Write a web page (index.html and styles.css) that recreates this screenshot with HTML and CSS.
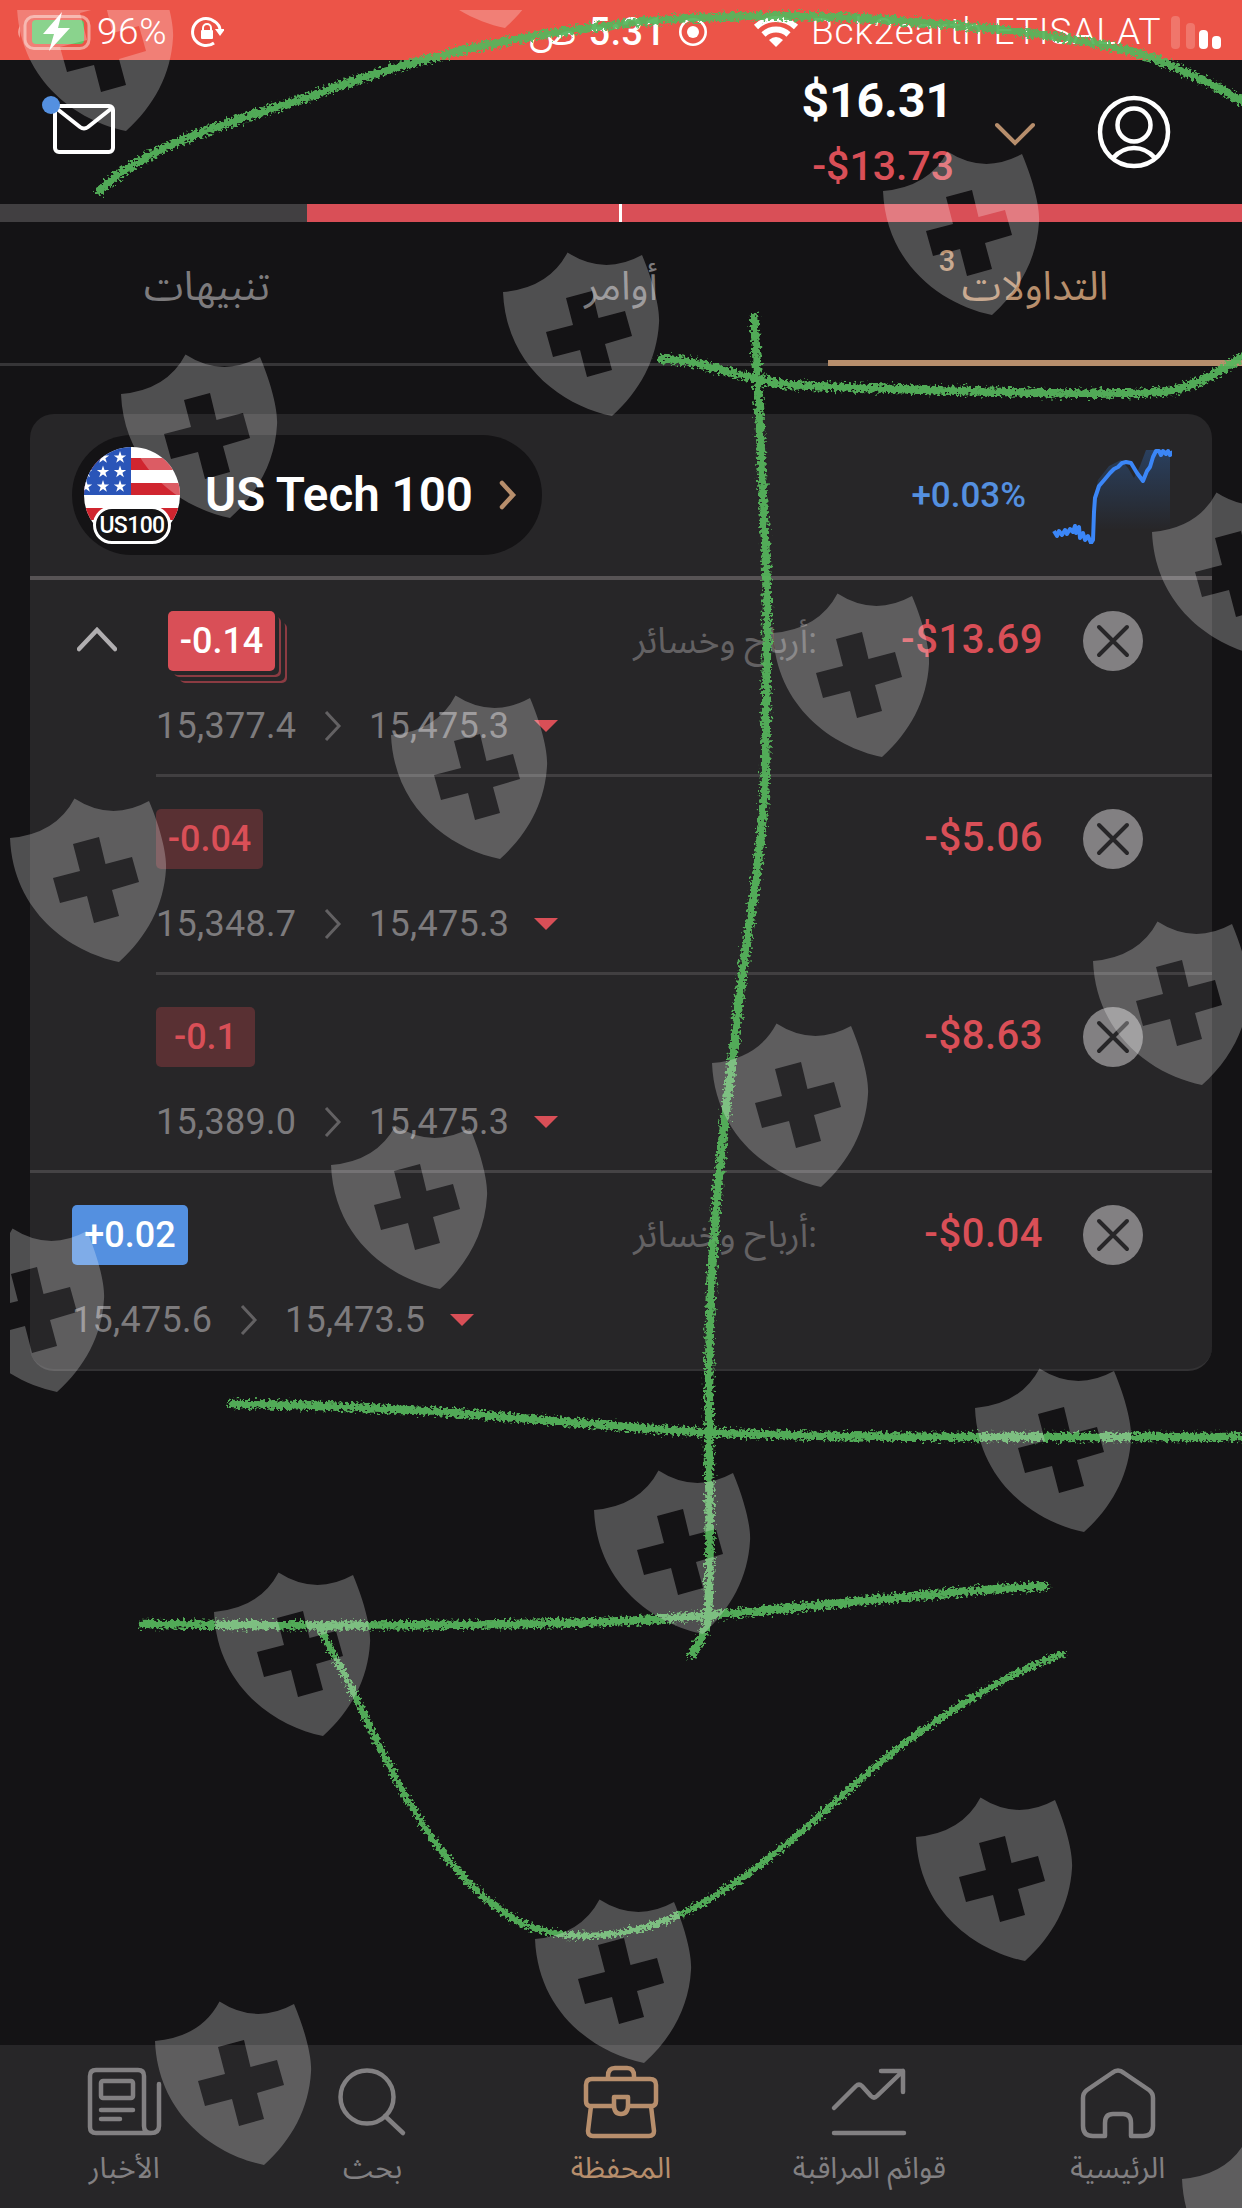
FILE: index.html
```html
<!DOCTYPE html>
<html lang="ar">
<head>
    <meta charset="UTF-8">
    <title>المحفظة</title>
    <link rel="stylesheet" href="styles.css">
</head>
<body>
    <div class="phone">
        <div class="status">
            <div class="battery">
                <svg width="76" height="40" viewBox="0 0 76 40">
                    <path d="M4 14Q0 20 4 26z" fill="#f59a90"/>
                    <rect x="9" y="4.500" width="64" height="32" rx="9" fill="none" stroke="#f4a198" stroke-width="3"/>
                    <rect x="16" y="8" width="52" height="24" rx="4" fill="#62c466"/>
                    <path d="M46 0L27 22h11l-5 17 21-23H42z" fill="#fff"/>
                </svg>
                <span class="percent">96%</span>
            </div>
            <svg class="lock" width="34" height="34" viewBox="0 0 34 34">
                <path d="M25 7A13.500 13.500 0 1 0 24 28M24 6q6 4 6 9" fill="none" stroke="#fff" stroke-width="3"/>
                <path d="M25 14h10l-5 7z" fill="#fff"/>
                <rect x="11" y="15" width="12" height="9" rx="1" fill="#fff"/>
                <path d="M13 16v-3a4 4 0 0 1 8 0v3" fill="none" stroke="#fff" stroke-width="2"/>
            </svg>
            <div class="clock"><span>ص</span><b>5:31</b></div>
            <svg class="record" width="30" height="30" viewBox="0 0 30 30">
                <circle cx="15" cy="15" r="12.700" fill="none" stroke="#fff" stroke-width="2.600"/>
                <circle cx="15" cy="15" r="6" fill="#fff"/>
            </svg>
            <svg class="wifi" width="46" height="32" viewBox="0 0 46 32">
                <path d="M3 11a29 29 0 0 1 40 0M10.500 18.500a18 18 0 0 1 25 0" fill="none" stroke="#fff" stroke-width="6"/>
                <path d="M23 31l-7-7q7-6 14 0z" fill="#fff"/>
            </svg>
            <span class="carrier">Bck2earth ETISALAT</span>
            <div class="signal"><i class="off s4"></i><i class="off s3"></i><i class="s2"></i><i class="s1"></i></div>
        </div>

        <div class="header">
            <div class="mail">
                <svg width="62" height="50" viewBox="0 0 62 50">
                    <rect x="2" y="2" width="58" height="46" rx="4" fill="none" stroke="#fff" stroke-width="4"/>
                    <path d="M3 4l24 19q4 3 8 0L59 4" fill="none" stroke="#fff" stroke-width="4"/>
                </svg>
                <span class="dot"></span>
            </div>
            <div class="balance">
                <div class="total">$16.31</div>
                <div class="diff">-$13.73</div>
            </div>
            <svg class="down" width="40" height="24" viewBox="0 0 40 24">
                <path d="M2 3l18 18L38 3" fill="none" stroke="#b78e6c" stroke-width="4" stroke-linecap="round"/>
            </svg>
            <svg class="user" width="74" height="74" viewBox="0 0 74 74" fill="none" stroke="#fff" stroke-width="4.500">
                <circle cx="37" cy="37" r="34"/>
                <circle cx="37" cy="30" r="16.500"/>
                <path d="M16 63q9-10 21-10t21 10"/>
            </svg>
        </div>

        <div class="margin-bar"><div class="used"><i></i></div></div>

        <div class="tabs">
            <div class="tab">تنبيهات</div>
            <div class="tab">أوامر</div>
            <div class="tab active"><span class="tab-name">التداولات<sup>3</sup></span></div>
        </div>

        <div class="card">
            <div class="card-head">
                <div class="pill">
                    <div class="flag">
                        <svg width="98" height="98" viewBox="0 0 98 98">
                            <clipPath id="round"><circle cx="49" cy="49" r="48"/></clipPath>
                            <g clip-path="url(#round)">
                                <rect width="98" height="98" fill="#fff"/>
                                <path d="M0 12h98v12H0zM0 37h98v12H0zM0 62h98v12H0zM0 86h98v12H0z" fill="#d0252f"/>
                                <rect width="48" height="49" fill="#2a55b8"/>
                                <g fill="#fff">
                                    <path id="star" d="M37 5l1.500 4.500h4.700l-3.800 2.800 1.500 4.500-3.900-2.800-3.800 2.800 1.400-4.500-3.800-2.800h4.700z"/>
                                    <use href="#star" x="-17"/>
                                    <use href="#star" y="14.500"/><use href="#star" x="-17" y="14.500"/><use href="#star" x="-34" y="14.500"/>
                                    <use href="#star" y="29"/><use href="#star" x="-17" y="29"/><use href="#star" x="-34" y="29"/>
                                </g>
                            </g>
                        </svg>
                        <span class="symbol">US100</span>
                    </div>
                    <span class="name">US Tech 100</span>
                    <svg width="20" height="30" viewBox="0 0 20 30"><path d="M4 3l11 12L4 27" fill="none" stroke="#b78e6c" stroke-width="4.500" stroke-linecap="round"/></svg>
                </div>
                <span class="change">+0.03%</span>
                <svg class="chart" width="120" height="98" viewBox="0 0 120 98">
                    <linearGradient id="fade" x1="0" y1="0" x2="0" y2="1">
                        <stop offset="0" stop-color="#2f6fc4" stop-opacity=".35"/>
                        <stop offset="1" stop-color="#2f6fc4" stop-opacity="0"/>
                    </linearGradient>
                    <path d="M40 84L42 52 46 34 57 20 69 14 76 22 82 32 88 20 94 4H118V84z" fill="url(#fade)"/>
                    <path d="M2 85l3 5 2-5 3 4 3-5 2 4 3-5 3 3 2-6 1 7 3-6 1 11 3-5 2 7 3-4 3 7 2-3 1-28 1-14 4-12 6-7 5-6 4-4 4-2 4-4 4-1 5 1 6 10 6 8 4-10 3-4 3-10 3-6 3 0 2 4 2-4 3 3 2-3 2 4 3-3 2 4" fill="none" stroke="#3b86f7" stroke-width="4" stroke-linejoin="round"/>
                </svg>
            </div>

            <div class="row group">
                <div class="toggle">
                    <svg width="40" height="26" viewBox="0 0 40 26"><path d="M2 23L20 4l18 19" fill="none" stroke="#b0aeb0" stroke-width="4.500" stroke-linecap="round"/></svg>
                </div>
                <div class="trade">
                    <div class="line">
                        <span class="amount sell stack">-0.14</span>
                        <span class="label">أرباح وخسائر:</span>
                        <span class="profit">-$13.69</span>
                        <svg class="close" width="60" height="60" viewBox="0 0 60 60"><use href="#close"/></svg>
                    </div>
                    <div class="prices"><span>15,377.4</span><svg class="next" width="18" height="32" viewBox="0 0 18 32"><use href="#next"/></svg><span>15,475.3</span><i class="fall"></i></div>
                </div>
            </div>
            <div class="row sub">
                <div class="trade">
                    <div class="line">
                        <span class="amount sell-dim">-0.04</span>
                        <span class="profit">-$5.06</span>
                        <svg class="close" width="60" height="60" viewBox="0 0 60 60"><use href="#close"/></svg>
                    </div>
                    <div class="prices"><span>15,348.7</span><svg class="next" width="18" height="32" viewBox="0 0 18 32"><use href="#next"/></svg><span>15,475.3</span><i class="fall"></i></div>
                </div>
            </div>
            <div class="row sub">
                <div class="trade">
                    <div class="line">
                        <span class="amount sell-dim short">-0.1</span>
                        <span class="profit">-$8.63</span>
                        <svg class="close" width="60" height="60" viewBox="0 0 60 60"><use href="#close"/></svg>
                    </div>
                    <div class="prices"><span>15,389.0</span><svg class="next" width="18" height="32" viewBox="0 0 18 32"><use href="#next"/></svg><span>15,475.3</span><i class="fall"></i></div>
                </div>
            </div>
            <div class="row single">
                <div class="trade">
                    <div class="line">
                        <span class="amount buy">+0.02</span>
                        <span class="label">أرباح وخسائر:</span>
                        <span class="profit">-$0.04</span>
                        <svg class="close" width="60" height="60" viewBox="0 0 60 60"><use href="#close"/></svg>
                    </div>
                    <div class="prices"><span>15,475.6</span><svg class="next" width="18" height="32" viewBox="0 0 18 32"><use href="#next"/></svg><span>15,473.5</span><i class="fall"></i></div>
                </div>
            </div>
        </div>

        <div class="nav">
            <div class="item">
                <svg width="76" height="72" viewBox="0 0 76 72" fill="none" stroke="#828082" stroke-width="4.500" stroke-linecap="round" stroke-linejoin="round">
                    <path d="M66 66H10q-6 0-6-6V9q0-6 6-6h42q6 0 6 6v50q0 7 7 7 8 0 8-7V17"/>
                    <rect x="15" y="14" width="32" height="17" rx="2"/>
                    <path d="M15 43h32M15 52h19"/>
                </svg>
                <span>الأخبار</span>
            </div>
            <div class="item">
                <svg width="76" height="72" viewBox="0 0 76 72" fill="none" stroke="#828082" stroke-width="4.500" stroke-linecap="round">
                    <circle cx="32" cy="30" r="26.500"/>
                    <path d="M50 49l18 17"/>
                </svg>
                <span>بحث</span>
            </div>
            <div class="item active">
                <svg width="76" height="72" viewBox="0 0 76 72" fill="none" stroke="#b78e6c" stroke-width="4.500" stroke-linejoin="round">
                    <path d="M25 12V9q0-8 7-8h12q7 0 7 8v3"/>
                    <path d="M31 39H7q-4 0-4-5V18q0-6 6-6h58q6 0 6 6v16q0 5-4 5H45"/>
                    <path d="M8 39L5 64q0 5 5 5h56q5 0 5-5l-3-25"/>
                    <path d="M31 30h14v8q0 9-7 9t-7-9z"/>
                </svg>
                <span>المحفظة</span>
            </div>
            <div class="item">
                <svg width="76" height="72" viewBox="0 0 76 72" fill="none" stroke="#828082" stroke-width="4.500" stroke-linecap="round" stroke-linejoin="round">
                    <path d="M3 41l22-22q3-3 6 0l9 10q3 3 6 0L72 4M50 4h22v21M3 66h70"/>
                </svg>
                <span>قوائم المراقبة</span>
            </div>
            <div class="item">
                <svg width="76" height="72" viewBox="0 0 76 72" fill="none" stroke="#828082" stroke-width="4.500" stroke-linejoin="round">
                    <path d="M25 69H13Q3 69 3 59V31q0-5 4-8L32 6q6-5 12 0l25 17q4 3 4 8v28q0 10-10 10H51V56q0-9-8-9H33q-8 0-8 9z"/>
                </svg>
                <span>الرئيسية</span>
            </div>
        </div>

        <!-- pen marks and shields drawn over the whole screen -->
        <svg class="overlay" width="1242" height="2208" viewBox="0 0 1242 2208">
            <defs>
                <g id="close">
                    <circle cx="30" cy="30" r="30" fill="#828082"/>
                    <path d="M16 16l28 28M44 16L16 44" stroke="#272628" stroke-width="4" stroke-linecap="round"/>
                </g>
                <path id="next" d="M2 2l13 14L2 30" fill="none" stroke="#636163" stroke-width="3"/>
                <path id="shield" fill-rule="evenodd" d="M0 41Q46 37 64.500 1.500 101 25 139 4C152 35 157 60 156 72 154 108 137 140 109 165 60 155 3 115 0 41zM63 47L70 74 43 81 50 106 77 99 84 126 109 119 102 93 129 85 122 60 95.500 67 89 40z"/>
                <filter id="chalk" x="-20" y="-20" width="1290" height="2260" filterUnits="userSpaceOnUse">
                    <feTurbulence type="fractalNoise" baseFrequency=".35" numOctaves="2" seed="4"/>
                    <feDisplacementMap in="SourceGraphic" scale="11" xChannelSelector="R" yChannelSelector="G"/>
                </filter>
                <clipPath id="area"><rect x="10" y="10" width="1232" height="2198"/></clipPath>
            </defs>
            <g class="pen" filter="url(#chalk)">
                <path d="M99 191C154 139 240 121 317 94C420 55 520 35 621 24C700 14 820 14 898 21C1010 28 1110 43 1150 57C1190 73 1215 85 1250 106"/>
                <path d="M661 359C700 359 740 379 791 385C850 388 960 391 1037 393Q1120 395 1171 391Q1210 381 1250 351"/>
                <path d="M754 317C758 370 761 460 765 540S766 690 765 777C761 870 744 950 738 1010S717 1160 712 1270C708 1350 709 1400 709 1460C710 1520 710 1570 708 1619Q702 1640 692 1654"/>
                <path d="M232 1404C380 1405 520 1418 640 1428S900 1437 1250 1437"/>
                <path d="M142 1624C300 1626 450 1627 600 1622C760 1616 900 1593 1045 1586"/>
                <path class="thin" d="M317 1625C342 1664 372 1735 401 1788S470 1895 521 1923C580 1948 650 1936 718 1894S850 1785 901 1746Q990 1680 1062 1654"/>
            </g>
            <g fill="#fff" fill-opacity=".255" clip-path="url(#area)">
                <use href="#shield" x="17" y="-34"/><use href="#shield" x="396" y="-137"/>
                <use href="#shield" x="883" y="150"/><use href="#shield" x="503" y="251"/><use href="#shield" x="121" y="353"/>
                <use href="#shield" x="1152" y="491"/><use href="#shield" x="773" y="592"/><use href="#shield" x="391" y="694"/><use href="#shield" x="10" y="797"/>
                <use href="#shield" x="1093" y="920"/><use href="#shield" x="712" y="1022"/><use href="#shield" x="331" y="1124"/><use href="#shield" x="-52" y="1227"/>
                <use href="#shield" x="975" y="1367"/><use href="#shield" x="594" y="1469"/><use href="#shield" x="214" y="1571"/>
                <use href="#shield" x="916" y="1796"/><use href="#shield" x="535" y="1898"/><use href="#shield" x="155" y="2000"/>
                <use href="#shield" x="1182" y="2138"/>
            </g>
        </svg>
    </div>
</body>
</html>
```

FILE: styles.css
```css
* {
    box-sizing: border-box;
}
body {
    margin: 0;
    background: #141315;
    font-family: Roboto, "Noto Sans Arabic", "DejaVu Sans", sans-serif;
    color: #fff;
}
svg {
    display: block;
    flex-shrink: 0;
}
.phone {
    position: relative;
    width: 1242px;
    height: 2208px;
    overflow: hidden;
    display: flex;
    flex-direction: column;
}
.status {
    height: 60px;
    background: #ec5448;
    display: flex;
    align-items: center;
    padding: 4px 18px 0 16px;
    font-size: 36px;
    line-height: 40px;
    white-space: nowrap;
}
.battery {
    display: flex;
    align-items: center;
    width: 174px;
    gap: 5px;
}
.percent {
    font-size: 37px;
    letter-spacing: .6px;
}
.percent, .carrier {
    font-weight: 300;
}
.clock {
    display: flex;
    gap: 12px;
    width: 130px;
    margin-left: 312px;
    justify-content: flex-end;
}
.clock b {
    font-weight: 500;
    font-size: 38px;
    letter-spacing: .7px;
}
.record {
    margin-left: 12px;
}
.wifi {
    margin-left: 45px;
}
.carrier {
    margin-left: 12px;
    width: 348px;
    font-size: 37px;
    letter-spacing: .85px;
}
.signal {
    display: flex;
    align-items: flex-end;
    gap: 4px;
    height: 33px;
    margin-left: 12px;
}
.signal i {
    width: 9px;
    border-radius: 4px;
    background: #fff;
}
.signal .off {
    background: #f0766b;
}
.signal .s4 { height: 33px; margin-right: 2px; }
.signal .s3 { height: 26px; }
.signal .s2 { height: 19px; }
.signal .s1 { height: 13px; }

.header {
    height: 144px;
    display: flex;
    align-items: flex-start;
    padding: 0 71px 0 53px;
}
.mail {
    position: relative;
    margin-top: 44px;
}
.dot {
    position: absolute;
    left: -11px;
    top: -8px;
    width: 18px;
    height: 18px;
    border-radius: 50%;
    background: #5490e0;
}
.balance {
    margin-left: auto;
    text-align: right;
}
.total {
    margin-top: 13px;
    margin-right: -5px;
    font-size: 48px;
    line-height: 56px;
    font-weight: 700;
}
.diff {
    margin-top: 13px;
    margin-right: -6px;
    font-size: 41px;
    line-height: 48px;
    font-weight: 500;
    color: #d94f57;
}
.down {
    margin: 62px 0 0 47px;
}
.user {
    margin: 35px 0 0 62px;
}
.margin-bar {
    height: 18px;
    background: #413f41;
}
.used {
    height: 18px;
    margin-left: 307px;
    background: #d94f57;
}
.used i {
    display: block;
    width: 3px;
    height: 18px;
    margin-left: 312px;
    background: #fff;
}

.tabs {
    display: grid;
    grid-template-columns: 1fr 1fr 1fr;
    height: 144px;
}
.tab {
    display: flex;
    justify-content: center;
    padding-top: 37px;
    font-size: 40px;
    line-height: 56px;
    color: #7d7b7d;
    border-bottom: 3px solid #363537;
}
.tab.active {
    color: #b78e6c;
    border-bottom: 6px solid #b78e6c;
}
.tab-name {
    position: relative;
}
.tab-name sup {
    position: absolute;
    left: -23px;
    top: -15px;
    font-size: 29px;
    line-height: 34px;
    font-weight: 500;
}

.card {
    margin: 48px 30px 0;
    height: 957px;
    border-radius: 24px;
    background: #272628;
    border-bottom: 2px solid #333234;
}
.card-head {
    height: 166px;
    display: flex;
    align-items: center;
    padding: 0 40px 0 42px;
    border-bottom: 4px solid #575355;
}
.pill {
    width: 470px;
    height: 120px;
    border-radius: 60px;
    background: #141315;
    display: flex;
    align-items: center;
    padding-left: 11px;
}
.flag {
    position: relative;
    width: 98px;
    height: 98px;
}
.symbol {
    position: absolute;
    left: 10px;
    top: 60px;
    width: 78px;
    height: 38px;
    border: 3px solid #fff;
    border-radius: 19px;
    background: #141315;
    font-size: 23px;
    line-height: 34px;
    font-weight: 500;
    text-align: center;
    letter-spacing: -.6px;
}
.name {
    width: 293px;
    margin-left: 24px;
    font-size: 47.500px;
    font-weight: 600;
    line-height: 60px;
    white-space: nowrap;
}
.change {
    margin-left: auto;
    font-size: 35px;
    font-weight: 500;
    color: #5490e0;
}
.chart {
    margin-left: 26px;
}

.row {
    height: 198px;
    display: flex;
}
.group {
    height: 194px;
}
.sub {
    margin-left: 126px;
    border-top: 3px solid #413f41;
}
.single {
    padding-left: 42px;
    border-top: 3px solid #454345;
}
.sub .trade, .single .trade {
    padding-top: 32px;
}
.toggle {
    width: 126px;
    padding: 46px 0 0 47px;
}
.trade {
    flex: 1;
    padding: 31px 69px 0 0;
}
.line {
    display: flex;
    align-items: center;
    height: 60px;
}
.amount {
    width: 107px;
    height: 60px;
    border-radius: 5px;
    font-size: 36px;
    line-height: 60px;
    text-align: center;
    font-weight: 500;
}
.sell {
    background: #d94f57;
}
.stack {
    margin-left: 12px;
    box-shadow: 4px 4px 0 #272628, 6px 6px 0 #8b3b42, 10px 10px 0 #272628, 12px 12px 0 #8b3b42;
}
.sell-dim {
    background: #593033;
    color: #d94f57;
}
.short {
    width: 99px;
}
.buy {
    width: 116px;
    background: #5490e0;
}
.label {
    direction: ltr;
    width: 190px;
    margin-left: auto;
    text-align: right;
    white-space: nowrap;
    font-size: 36px;
    line-height: 56px;
    color: #636163;
}
.profit {
    width: 226px;
    margin-right: -1px;
    margin-top: -3px;
    font-size: 40px;
    font-weight: 500;
    letter-spacing: .5px;
    text-align: right;
    color: #d94f57;
}
.line .amount + .profit {
    margin-left: auto;
}
.close {
    margin-left: 41px;
}
.prices {
    display: flex;
    align-items: center;
    height: 44px;
    margin-top: 33px;
    font-size: 36px;
    letter-spacing: .3px;
    color: #7d7b7d;
}
.prices span {
    width: 139px;
}
.next {
    margin: 0 27px 0 29px;
}
.fall {
    border: 12px solid transparent;
    border-top-color: #d94f57;
    border-bottom: 0;
    margin-left: 26px;
}

.nav {
    margin-top: auto;
    height: 163px;
    background: #272628;
    display: grid;
    grid-template-columns: repeat(5, 1fr);
}
.item {
    display: flex;
    flex-direction: column;
    align-items: center;
    padding-top: 22px;
    color: #828082;
    font-size: 29.500px;
    line-height: 44px;
}
.item span {
    margin-top: 7px;
}
.item.active {
    color: #b78e6c;
}
.item svg {
    overflow: visible;
}

.overlay {
    position: absolute;
    left: 0;
    top: 0;
}
.pen {
    fill: none;
    stroke: #57b65b;
    stroke-width: 8.500;
    stroke-linecap: round;
    opacity: .93;
}
.thin {
    stroke-width: 6.500;
}
```
